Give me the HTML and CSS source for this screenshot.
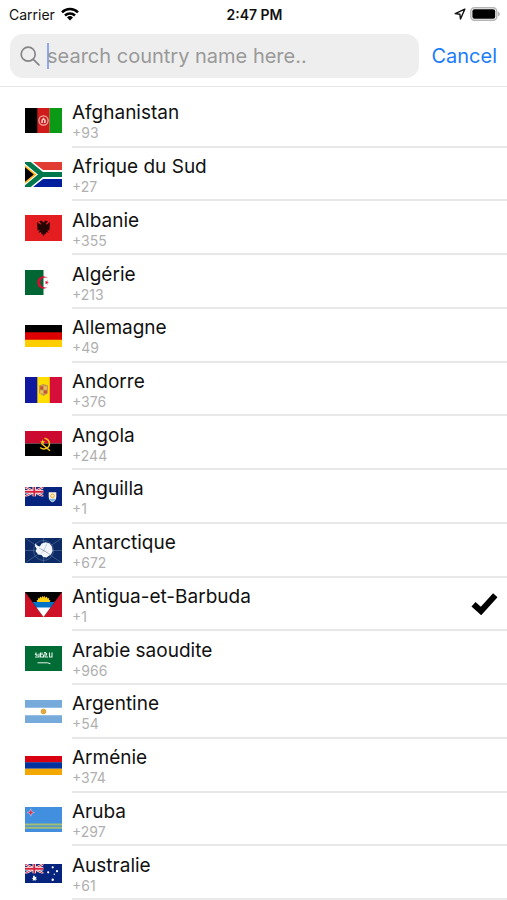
FILE: index.html
```html
<!DOCTYPE html>
<html lang="fr">
<head>
<meta charset="utf-8">
<meta name="viewport" content="width=device-width, initial-scale=1">
<title>Countries</title>
<link rel="stylesheet" href="styles.css">
</head>
<body>
<svg class="defs" aria-hidden="true">
  <symbol id="union-jack" viewBox="0 0 60 30" preserveAspectRatio="none">
    <path fill="#1a2f78" d="M0 0h60v30H0z"/>
    <path stroke="#fff" stroke-width="7" d="M0 0l60 30M60 0L0 30"/>
    <path stroke="#d8203c" stroke-width="3" d="M0 0l60 30M60 0L0 30"/>
    <path stroke="#fff" stroke-width="11" d="M30 0v30M0 15h60"/>
    <path stroke="#d8203c" stroke-width="6" d="M30 0v30M0 15h60"/>
  </symbol>
</svg>

<header class="top">
  <div class="status">
    <div class="status-left">
      <span>Carrier</span>
      <svg class="wifi" viewBox="0 0 18 14" aria-hidden="true">
        <g fill="none" stroke="#000" stroke-width="2.500">
          <path d="M1 5.400a11.400 11.400 0 0 1 16 0"/>
          <path d="M4 8.500a7.200 7.200 0 0 1 10 0"/>
        </g>
        <path d="M9 13.600l-3-3.100a4.300 4.300 0 0 1 6 0z"/>
      </svg>
    </div>
    <time class="clock">2:47 PM</time>
    <div class="status-right">
      <svg class="location" viewBox="0 0 12 12" aria-hidden="true">
        <path fill="none" stroke="#111" stroke-width="1.400" stroke-linejoin="round" d="M10.800 1.200L1.200 5.600l4.700.7.6 4.700z"/>
      </svg>
      <svg class="battery" viewBox="0 0 30 14" aria-hidden="true">
        <rect x=".8" y=".8" width="26" height="12.400" rx="3.600" fill="#fff" stroke="#b4b4b4" stroke-width="1.400"/>
        <rect x="2.400" y="2.200" width="22.800" height="9.600" rx="2"/>
        <path fill="#b4b4b4" d="M28 4.500c2.400.8 2.400 4.200 0 5z"/>
      </svg>
    </div>
  </div>
  <form class="search">
    <label class="field">
      <svg class="glass" viewBox="0 0 20 20" fill="none" stroke="#858585" stroke-width="1.700" stroke-linecap="round" aria-hidden="true">
        <circle cx="8.200" cy="8.200" r="7"/><path d="M13.300 13.300l5.600 5.600"/>
      </svg>
      <span class="caret"></span>
      <input type="text" placeholder="search country name here.." aria-label="Search country">
    </label>
    <button type="button" class="cancel">Cancel</button>
  </form>
</header>

<ul class="list">
  <li><button type="button" class="row">
    <svg class="flag" viewBox="0 0 37 25" aria-hidden="true"><path d="M0 0h13v25H0z"/><path fill="#d01b1b" d="M12.300 0h12.400v25H12.300z"/><path fill="#0a9a16" d="M24.700 0H37v25H24.700z"/><circle cx="18.500" cy="12.500" r="4.600" fill="none" stroke="#f0b0a8" stroke-width="1.200"/><path fill="#f4c8c0" d="M16.300 15v-3l2.200-2.500 2.200 2.500v3z"/><path fill="#d01b1b" d="M18 12h1v3h-1z"/></svg>
    <span class="text"><span class="name">Afghanistan</span><span class="code">+93</span></span>
  </button></li>
  <li><button type="button" class="row">
    <svg class="flag" viewBox="0 0 37 25" aria-hidden="true"><path fill="#fff" d="M0 0h37v25H0z"/><path fill="#e03c31" d="M6 0h31v8H18z"/><path fill="#001f9c" d="M6 25h31v-8H18z"/><path fill="none" stroke="#fff" stroke-width="8" d="M0-1.500l17 14L0 26.500M17 12.500h20"/><path fill="none" stroke="#00784b" stroke-width="5" d="M0-1.500l17 14L0 26.500M16 12.500h21"/><path fill="#ffb81c" d="M0 3.200l11.500 9.300L0 21.800z"/><path d="M0 5.300l8.800 7.200L0 19.700z"/></svg>
    <span class="text"><span class="name">Afrique du Sud</span><span class="code">+27</span></span>
  </button></li>
  <li><button type="button" class="row">
    <svg class="flag" viewBox="0 0 37 26" aria-hidden="true"><path fill="#e41e20" d="M0 0h37v26H0z"/><path fill="#260505" d="M18.500 7.500l-2-2-2.500 1 2 1.700-.5 1.500-3.500-2.700.6 8.500 2.200-.6-1.400 2.900 2.500-.9.300 2.300 1-.6 1.300 3 1.300-3 1 .6.300-2.300 2.500.9-1.400-2.900 2.200.6.600-8.500-3.500 2.700-.5-1.500 2-1.700-2.500-1z"/></svg>
    <span class="text"><span class="name">Albanie</span><span class="code">+355</span></span>
  </button></li>
  <li><button type="button" class="row">
    <svg class="flag" viewBox="0 0 37 25" aria-hidden="true"><path fill="#fff" d="M18 0h19v25H18z"/><path fill="#006633" d="M0 0h18.500v25H0z"/><path fill="#d21034" d="M22.700 8.100a6.200 6.200 0 1 0 0 8.800 5 5 0 1 1 0-8.800zM24 12.500l-4.200 1.300 2.600-3.500v4.400l-2.600-3.500z"/></svg>
    <span class="text"><span class="name">Algérie</span><span class="code">+213</span></span>
  </button></li>
  <li><button type="button" class="row">
    <svg class="flag" viewBox="0 0 37 22" aria-hidden="true"><path d="M0 0h37v8H0z"/><path fill="#dd0000" d="M0 7.300h37V15H0z"/><path fill="#ffce00" d="M0 14.700h37V22H0z"/></svg>
    <span class="text"><span class="name">Allemagne</span><span class="code">+49</span></span>
  </button></li>
  <li><button type="button" class="row">
    <svg class="flag" viewBox="0 0 37 26" aria-hidden="true"><path fill="#1018a0" d="M0 0h13v26H0z"/><path fill="#fedd00" d="M12.300 0h12.700v26H12.300z"/><path fill="#d50f3a" d="M24.800 0H37v26H24.800z"/><path fill="#c99a4c" d="M14 8.500l4.500-1.500L23 8.500v7.800l-4.500 2.700-4.500-2.700z"/><path fill="#c8503a" d="M15.200 9.500h2.800v3h-2.800zM19 13.500h2.800v3H19z"/><path fill="#e8c060" d="M19 9.500h2.800v3H19zM15.200 13.500h2.800v3h-2.800z"/></svg>
    <span class="text"><span class="name">Andorre</span><span class="code">+376</span></span>
  </button></li>
  <li><button type="button" class="row">
    <svg class="flag" viewBox="0 0 37 25" aria-hidden="true"><path fill="#cc092f" d="M0 0h37v12.500H0z"/><path d="M0 12.500h37V25H0z"/><g fill="none" stroke="#f5c518" stroke-width="1.500"><path d="M19.500 7.200c6 1.200 6.600 8.600 1.500 10.300-2.300.8-4.400.2-5.800-1"/><path d="M16.500 12.500l8.500 7.200"/></g><path fill="#f5c518" d="M17.700 8.300l.7 1.900h2l-1.600 1.200.6 1.900-1.700-1.200-1.700 1.200.6-1.900-1.600-1.200h2z"/></svg>
    <span class="text"><span class="name">Angola</span><span class="code">+244</span></span>
  </button></li>
  <li><button type="button" class="row">
    <svg class="flag" viewBox="0 0 37 19" aria-hidden="true"><path fill="#06247d" d="M0 0h37v19H0z"/><use href="#union-jack" width="18.500" height="9.500"/><path fill="#fbf5dc" d="M23.700 5.200h7.600v4.500c0 3-1.600 4.500-3.800 5.600-2.200-1.100-3.800-2.600-3.800-5.600z"/><path fill="#75b7e0" d="M24.300 11.800h6.400c-.6 1.400-1.600 2.200-3.200 3-1.600-.8-2.600-1.600-3.200-3z"/><circle cx="27.500" cy="8.800" r="1.800" fill="none" stroke="#f0a030"/></svg>
    <span class="text"><span class="name">Anguilla</span><span class="code">+1</span></span>
  </button></li>
  <li><button type="button" class="row">
    <svg class="flag" viewBox="0 0 37 25" aria-hidden="true"><path fill="#0b2a66" d="M0 0h37v25H0z"/><g fill="none" stroke="#6a82ad" stroke-width=".5"><path d="M0 0l37 25M37 0L0 25M18.500 0v25M0 12.500h37"/><circle cx="18.500" cy="12.500" r="10"/></g><path fill="#f2f5fa" d="M10.300 5.200l1.800 2.300 2.600.9 2-3 4-1.200 4 1.300 2.300 3.200.6 4.200-1.500 3.400-2.800 2-1.800 1.200-3.300-.6-1.700-2-3.300-.4-2.500-3 .9-3-1.600-2.200z"/><path stroke="#a7b5cf" stroke-width=".6" d="M14 10l5 2.500 6 4M19 12.500l3-7M19 12.500l-3 3"/></svg>
    <span class="text"><span class="name">Antarctique</span><span class="code">+672</span></span>
  </button></li>
  <li><button type="button" class="row" aria-pressed="true">
    <svg class="flag" viewBox="0 0 37 25" aria-hidden="true"><path fill="#ce1126" d="M0 0h37v25H0z"/><path d="M0 0h37L18.500 25z"/><path fill="#0072c6" d="M7.400 10h22.200l-4.400 6H11.800z"/><path fill="#fff" d="M11.500 15.500h14L18.500 25z"/><path fill="#fcd116" d="M12.300 10l-.8-1.800 1.600-.2-.3-2 1.800.6.400-2 1.700 1.100 1-1.900.8 1.700.8-1.700 1 1.900L22 4.600l.4 2 1.800-.6-.3 2 1.600.2-.8 1.800z"/></svg>
    <span class="text"><span class="name">Antigua-et-Barbuda</span><span class="code">+1</span></span>
    <svg class="check" viewBox="0 0 27 22" aria-hidden="true"><path fill="none" stroke="#000" stroke-width="6" d="M2.500 11.200l7.500 6.800L24.300 2.300"/></svg>
  </button></li>
  <li><button type="button" class="row">
    <svg class="flag" viewBox="0 0 37 25" aria-hidden="true"><path fill="#006c35" d="M0 0h37v25H0z"/><g fill="none" stroke="#e6f2ea"><path stroke-width="1.100" d="M10 11h4V7.500M11 6.500v2.500h2M15.500 6.500V11h3V8.500M17 6.500v2.500M20 6.500V11h3M21.500 7v2.500M24.500 6.500V11h2.500V6.500M10 8l2 1.500M19 6.500h2"/><path d="M12.500 16.800h10l3 1"/></g></svg>
    <span class="text"><span class="name">Arabie saoudite</span><span class="code">+966</span></span>
  </button></li>
  <li><button type="button" class="row">
    <svg class="flag" viewBox="0 0 37 23" aria-hidden="true"><path fill="#fff" d="M0 0h37v23H0z"/><path fill="#75aadb" d="M0 0h37v7.700H0zM0 15.300h37V23H0z"/><circle cx="18.500" cy="11.500" r="2.800" fill="#e0a83e"/></svg>
    <span class="text"><span class="name">Argentine</span><span class="code">+54</span></span>
  </button></li>
  <li><button type="button" class="row">
    <svg class="flag" viewBox="0 0 37 19" aria-hidden="true"><path fill="#d90012" d="M0 0h37v6.500H0z"/><path fill="#0033a0" d="M0 6.300h37v6.500H0z"/><path fill="#f2a800" d="M0 12.700h37V19H0z"/></svg>
    <span class="text"><span class="name">Arménie</span><span class="code">+374</span></span>
  </button></li>
  <li><button type="button" class="row">
    <svg class="flag" viewBox="0 0 37 25" aria-hidden="true"><path fill="#418fde" d="M0 0h37v25H0z"/><path stroke="#a3bd72" stroke-width="2" d="M0 17.500h37M0 20.700h37"/><path fill="#d8304c" stroke="#d8d8f0" stroke-width=".5" d="M5.700 1.800l1 2.700 2.700 1-2.700 1-1 2.700-1-2.700-2.700-1 2.700-1z"/></svg>
    <span class="text"><span class="name">Aruba</span><span class="code">+297</span></span>
  </button></li>
  <li><button type="button" class="row">
    <svg class="flag" viewBox="0 0 37 19" aria-hidden="true"><path fill="#06247d" d="M0 0h37v19H0z"/><use href="#union-jack" width="18.500" height="9.500"/><g fill="#fff"><path d="M9.300 11.600l.7 1.500 1.700-.4-.8 1.500 1.300 1.200-1.700.2-.2 1.700-1-1.400-1.700.9.500-1.700-1.500-.8 1.600-.6-.2-1.700z"/><circle cx="27.700" cy="3.300" r="1.100"/><circle cx="23.200" cy="8.300" r="1.100"/><circle cx="32" cy="7.200" r="1.100"/><circle cx="27.700" cy="15.800" r="1.200"/><circle cx="29.300" cy="10.300" r=".7"/></g></svg>
    <span class="text"><span class="name">Australie</span><span class="code">+61</span></span>
  </button></li>
</ul>
</body>
</html>
```

FILE: styles.css
```css
* {
  box-sizing: border-box;
}

body {
  margin: 0;
  min-height: 100vh;
  display: flex;
  flex-direction: column;
  background: #fff;
  color: #111;
  font-family: Inter, "Liberation Sans", sans-serif;
}

button,
input {
  font: inherit;
  border: 0;
  background: none;
  padding: 0;
}

svg {
  display: block;
  flex: none;
}

.defs {
  position: absolute;
  width: 0;
  height: 0;
}

.top {
  border-bottom: 1px solid #e4e4e4;
  padding-bottom: 8px;
}

.status {
  display: grid;
  grid-template-columns: 1fr auto 1fr;
  align-items: center;
  height: 28px;
  padding: 0 7px 0 9px;
  font-size: 14px;
}

.status-left,
.status-right {
  display: flex;
  align-items: center;
  gap: 6px;
}

.status-right {
  justify-content: flex-end;
  gap: 4px;
}

.clock {
  font-weight: 600;
}

.wifi {
  width: 18px;
  height: 14px;
}

.location {
  width: 12px;
  height: 12px;
}

.battery {
  width: 30px;
  height: 14px;
}

.search {
  display: flex;
  align-items: center;
  gap: 12px;
  padding: 6px 10px 0;
}

.field {
  flex: 1;
  min-width: 0;
  height: 44px;
  display: flex;
  align-items: center;
  padding: 0 10px;
  border-radius: 13px;
  background: #eee;
}

.glass {
  width: 20px;
  height: 20px;
  margin-right: 7px;
}

.caret {
  flex: none;
  width: 2px;
  height: 26px;
  margin-right: -2px;
  background: #8fa6f0;
}

.field input {
  flex: 1;
  min-width: 0;
  font-size: 20px;
  outline: 0;
}

.field input::placeholder {
  color: #999;
  opacity: 1;
}

.cancel {
  color: #1a7cf9;
  font-size: 20px;
}

.list {
  flex: 1;
  display: grid;
  grid-auto-rows: 1fr;
  margin: 0;
  padding: 7px 0 0;
  list-style: none;
}

.list li {
  display: flex;
}

.row {
  position: relative;
  flex: 1;
  display: flex;
  align-items: center;
  gap: 10px;
  padding-left: 25px;
  color: inherit;
  text-align: left;
}

.flag {
  width: 37px;
}

.text {
  flex: 1;
  align-self: stretch;
  display: flex;
  flex-direction: column;
  justify-content: center;
  padding-top: 2px;
  border-bottom: 2px solid #e8e8e8;
}

.name {
  font-size: 19px;
  line-height: 24px;
}

.code {
  color: #b0b0b0;
  font-size: 14px;
  line-height: 15px;
}

.check {
  position: absolute;
  right: 9px;
  width: 27px;
  height: 22px;
}
```
